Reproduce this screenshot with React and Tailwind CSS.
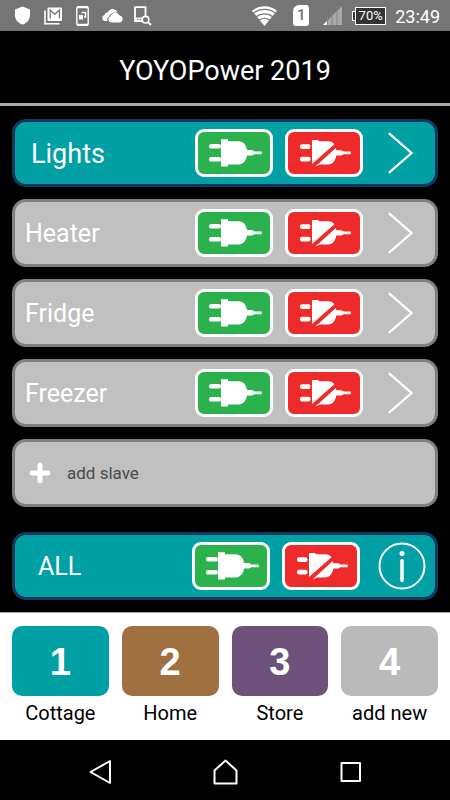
import clsx from 'clsx';

const SLAVES = [
  { name: 'Lights', active: true },
  { name: 'Heater' },
  { name: 'Fridge' },
  { name: 'Freezer' },
];

const SITES = [
  { number: 1, name: 'Cottage', color: 'bg-[#00a0a5]' },
  { number: 2, name: 'Home', color: 'bg-[#a07040]' },
  { number: 3, name: 'Store', color: 'bg-[#6e527b]' },
  { number: 4, name: 'add new', color: 'bg-[#bababa]' },
];

function StatusBar() {
  return (
    <div className="flex h-[31px] items-center bg-[#757575] pl-[15px] pr-[10px] text-white">
      <svg width="15" height="19" viewBox="0 0 15 19" fill="currentColor">
        <path d="M7.5 0.5 15 3.5V9c0 4.500-3 8.200-7.500 9.500C3 17.200 0 13.500 0 9V3.500z" />
      </svg>
      <svg className="ml-[14px]" width="18" height="18" viewBox="0 0 18 18" fill="none" stroke="currentColor">
        <path d="M1 3.500V16.800H15.500" strokeWidth="1.600" />
        <rect x="3.500" y="0.500" width="14.500" height="13.500" rx="1" fill="currentColor" stroke="none" />
        <path d="M6.200 11.500V3l4.600 4.300L15.400 3v8.500" stroke="#757575" strokeWidth="1.300" />
      </svg>
      <svg className="ml-[14px]" width="13" height="20" viewBox="0 0 13 20" fill="none" stroke="currentColor">
        <rect x="0.800" y="0.800" width="11.400" height="18.400" rx="1.500" strokeWidth="1.400" />
        <path d="M1 1.500H12M1 18.500H12" strokeWidth="1.500" />
        <path d="M5.500 6.500H9.500V11H8" strokeWidth="1.400" />
        <rect x="3" y="9" width="4" height="4.500" fill="currentColor" stroke="none" />
      </svg>
      <svg className="ml-[13px]" width="21" height="14" viewBox="0 0 21 14" fill="currentColor">
        <path d="M5.500 12H3a3 3 0 0 1-.6-5.900A4 4 0 0 1 6 3.300 5.200 5.200 0 0 1 15.300 2.700L14 3.700a5.500 5.500 0 0 0-6.700 3.800A3.500 3.500 0 0 0 5.500 12z" />
        <path d="M9.500 13.500a3 3 0 0 1-.8-5.900A4.700 4.700 0 0 1 17.600 6.500 3.600 3.600 0 0 1 18 13.500z" />
      </svg>
      <svg className="ml-[11px]" width="18" height="20" viewBox="0 0 18 20" fill="none" stroke="currentColor">
        <path d="M9 15.200H1V1.200H11.500V11" strokeWidth="1.800" />
        <path d="M1 11.500H8V16H1z" fill="currentColor" stroke="none" />
        <path d="M3 13.500H4.300M5.800 13.500H7.100" stroke="#757575" strokeWidth="1.500" />
        <circle cx="11.500" cy="13.700" r="3.300" strokeWidth="1.600" />
        <path d="M13.800 16 17 19" strokeWidth="2" />
      </svg>

      <div className="flex-1" />

      <svg width="25" height="20" viewBox="0 0 25 20" fill="currentColor">
        <path d="M12.500 20 0 4.800C7 -1.300 18 -1.300 25 4.800z" />
        <path
          d="M1 7.500C7.500 2 17.500 2 24 7.500M4 11C9 6.800 16 6.800 21 11M7 14.500C10.500 11.700 14.500 11.700 18 14.500"
          fill="none"
          stroke="#757575"
          strokeWidth="1.100"
        />
      </svg>
      <div className="ml-4 flex h-[21px] w-4 items-center justify-center rounded-[3px] rounded-tl-[6px] bg-white text-[15px] font-medium text-[#757575]">
        1
      </div>
      <svg className="ml-[14px]" width="19" height="19" viewBox="0 0 19 19">
        <path d="M0 19 19 0V19z" fill="#a9a9a9" />
        <path d="M0 19 4 15V19z" fill="#fff" />
        <path d="M4.500 10V19M9 5V19M14 0V19" stroke="#858585" strokeWidth="1" />
      </svg>
      <div className="ml-[10px] flex items-center">
        <div className="h-[10px] w-[3px] border border-r-0 border-white bg-[#333]" />
        <div className="flex h-[18px] w-[31px] items-center justify-center border border-white bg-[#333] text-[13px]">
          70%
        </div>
      </div>
      <time className="ml-[9px] pt-px text-[18px]">23:49</time>
    </div>
  );
}

function PlugButton({ on, label }) {
  return (
    <button
      aria-label={label}
      className={clsx(
        'h-12 w-[78px] shrink-0 rounded-[9px] border-[3px] border-white',
        on ? 'bg-[#2bb24c]' : 'bg-[#ee2a2a]'
      )}
    >
      <svg width="72" height="42" viewBox="3 3 72 42" fill="#fff">
        {on ? (
          <>
            <rect x="14" y="15" width="12" height="4.600" rx="2.200" />
            <rect x="14" y="28" width="12" height="4.600" rx="2.200" />
            <path d="M26 10.300H33V12.200H43.500C48.500 12.200 51.300 16 52 21H57L59.500 22.400H66.700V25.200H59.500L57 26.600H52C51.300 31.600 48.500 35.400 43.500 35.400H33V37.600H26z" />
          </>
        ) : (
          <>
            <rect x="15" y="15.300" width="10.500" height="4.600" rx="2" />
            <rect x="15" y="27.800" width="10.500" height="4.600" rx="2" />
            <path d="M27 11H33.500V12.200H43C46 12.200 48 13.400 49.500 15.300L27 35z" />
            <path d="M30.500 37.600 50.500 19.200 51.500 21.300H56.500L58.500 22.600H65.700V25.300H58.500L56.500 26.600H51.300C50.500 31.500 48 35.600 43 35.600H35z" />
          </>
        )}
      </svg>
    </button>
  );
}

function Panel({ active, className, children }) {
  return (
    <div
      className={clsx(
        'flex h-[68px] items-center rounded-[14px] border-[3px]',
        active ? 'border-[#17375e] bg-[#00a0a5]' : 'border-[#7f7f7f] bg-[#c0c0c0]',
        className
      )}
    >
      {children}
    </div>
  );
}

function SlaveRow({ name, active }) {
  return (
    <Panel active={active} className="pr-[22px]">
      <span className={clsx('flex-1 pt-0.5 text-white', active ? 'pl-4 text-[27px]' : 'pl-[10px] text-[25px]')}>
        {name}
      </span>
      <div className="flex gap-3">
        <PlugButton on label={`${name} on`} />
        <PlugButton label={`${name} off`} />
      </div>
      <button aria-label={`Open ${name}`} className="ml-[25px]">
        <svg width="25" height="42" viewBox="0 0 25 42" fill="none" stroke="#fff" strokeWidth="2.200">
          <path d="M0.800 1.200 23.500 21 0.800 40.800" />
        </svg>
      </button>
    </Panel>
  );
}

function NavBar() {
  return (
    <nav className="flex h-[60px] items-center justify-center gap-[100px] bg-black pt-1">
      <button aria-label="Back">
        <svg width="25" height="26" viewBox="0 0 25 26" fill="none" stroke="#fff" strokeWidth="2" strokeLinejoin="round">
          <path d="M22 2V24L2.500 13z" />
        </svg>
      </button>
      <button aria-label="Home">
        <svg width="25" height="26" viewBox="0 0 25 26" fill="none" stroke="#fff" strokeWidth="2" strokeLinejoin="round">
          <path d="M1.500 24.500V11.500L12.500 1.500 23.500 11.500V24.500z" />
        </svg>
      </button>
      <button aria-label="Recent apps">
        <svg width="25" height="26" viewBox="0 0 25 26" fill="none" stroke="#fff" strokeWidth="2" strokeLinejoin="round">
          <rect x="3.500" y="4" width="18.500" height="18" />
        </svg>
      </button>
    </nav>
  );
}

export default function App() {
  return (
    <div className="flex min-h-screen flex-col bg-black font-[Roboto,sans-serif]">
      <StatusBar />
      <header className="flex h-[75px] items-center justify-center border-b-[3px] border-[#a9a7a9] pt-2">
        <h1 className="text-[27px] text-white">YOYOPower 2019</h1>
      </header>

      <main className="flex-1 px-3 pb-3 pt-[13px]">
        <div className="flex flex-col gap-3">
          {SLAVES.map((slave) => (
            <SlaveRow key={slave.name} {...slave} />
          ))}
          <Panel>
            <button className="flex h-full w-full items-center gap-4 pl-[14px] text-[17px] text-[#4a4a4a]">
              <svg width="22" height="22" viewBox="0 0 22 22" stroke="#fff" strokeWidth="5" strokeLinecap="round">
                <path d="M11 3.200V18.800M3.200 11H18.800" />
              </svg>
              <span className="pt-0.5">add slave</span>
            </button>
          </Panel>
        </div>

        <Panel active className="mt-[25px] pr-[9px]">
          <span className="flex-1 pl-[23px] pt-0.5 text-[25px] text-white">ALL</span>
          <div className="flex gap-3">
            <PlugButton on label="All on" />
            <PlugButton label="All off" />
          </div>
          <button aria-label="Info" className="ml-[18px]">
            <svg width="48" height="48" viewBox="0 0 48 48" fill="none" stroke="#fff">
              <circle cx="24" cy="24" r="22.500" strokeWidth="2" />
              <circle cx="24" cy="11.500" r="2.500" fill="#fff" stroke="none" />
              <path d="M24 18.500V38.500" strokeWidth="3.500" strokeLinecap="round" />
            </svg>
          </button>
        </Panel>
      </main>

      <div className="grid grid-cols-4 gap-[13px] border-t border-[#a9a7a9] bg-white px-3 pb-[15px] pt-[13px]">
        {SITES.map((site) => (
          <button key={site.number} className="text-center">
            <span
              className={clsx(
                "flex h-[70px] items-center justify-center rounded-[10px] pt-0.5 font-['Liberation_Sans',sans-serif] text-[38px] font-bold text-white",
                site.color
              )}
            >
              {site.number}
            </span>
            <span className="mt-[5px] block text-[20px] leading-6 text-black">{site.name}</span>
          </button>
        ))}
      </div>
      <NavBar />
    </div>
  );
}
